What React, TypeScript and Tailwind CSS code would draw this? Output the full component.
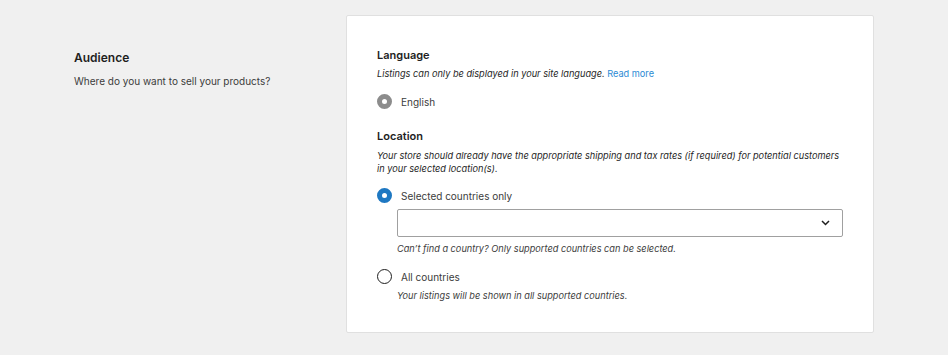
import React from 'react';

type RadioProps = {
  checked?: boolean;
  disabled?: boolean;
};

const Radio: React.FC<RadioProps> = ({ checked, disabled }) => {
  if (checked && disabled) {
    return <span className="block w-[15px] h-[15px] rounded-full border-[5px] border-[#8c8c8c] bg-white shrink-0" />;
  }
  if (checked) {
    return <span className="block w-[15px] h-[15px] rounded-full border-[5px] border-[#1e78c2] bg-white shrink-0" />;
  }
  return <span className="block w-[15px] h-[15px] rounded-full border border-[#1e1e1e] bg-white shrink-0" />;
};

const App: React.FC = () => {
  return (
    <div className="w-[948px] h-[355px] bg-[#f0f0f0] text-[#1e1e1e] font-['Inter',sans-serif] flex pt-[15px] pl-[74px]">
      <div className="w-[272px] pt-[35px]">
        <h2 className="text-[12px] font-semibold leading-[16px]">Audience</h2>
        <p className="mt-[8px] text-[10px] leading-[14px] text-[#3c3c3c]">Where do you want to sell your products?</p>
      </div>
      <div className="w-[528px] h-[318px] bg-white border border-[#e0e0e0] rounded-[2px] px-[30px] pt-[32px]">
        <h3 className="text-[11px] font-semibold leading-[14px]">Language</h3>
        <p className="mt-[6px] text-[9.2px] italic leading-[12px]">
          Listings can only be displayed in your site language.{' '}
          <span className="not-italic text-[#2c8ad4]">Read more</span>
        </p>
        <div className="mt-[14px] flex items-center gap-[9px]">
          <Radio checked disabled />
          <span className="text-[10px] leading-[14px] text-[#3c3c3c]">English</span>
        </div>

        <h3 className="mt-[20px] text-[11px] font-semibold leading-[14px]">Location</h3>
        <p className="mt-[6px] text-[9.2px] italic leading-[13px]">
          Your store should already have the appropriate shipping and tax rates (if required) for potential customers in your selected location(s).
        </p>
        <div className="mt-[13px] flex items-center gap-[9px]">
          <Radio checked />
          <span className="text-[10px] leading-[14px] text-[#3c3c3c]">Selected countries only</span>
        </div>
        <div className="ml-[20px] mt-[6px] h-[28px] border border-[#a0a0a0] rounded-[2px] flex items-center justify-end pr-[12px]">
          <svg width="9" height="6" viewBox="0 0 9 6" fill="none">
            <path d="M1 1l3.5 3.5L8 1" stroke="#1e1e1e" strokeWidth="1.5" />
          </svg>
        </div>
        <p className="ml-[20px] mt-[6px] text-[9.2px] italic leading-[12px] text-[#3c3c3c]">
          Can’t find a country? Only supported countries can be selected.
        </p>
        <div className="mt-[14px] flex items-center gap-[9px]">
          <Radio />
          <span className="text-[10px] leading-[14px] text-[#3c3c3c]">All countries</span>
        </div>
        <p className="ml-[20px] mt-[6px] text-[9.2px] italic leading-[12px] text-[#3c3c3c]">
          Your listings will be shown in all supported countries.
        </p>
      </div>
    </div>
  );
};

export default App;
